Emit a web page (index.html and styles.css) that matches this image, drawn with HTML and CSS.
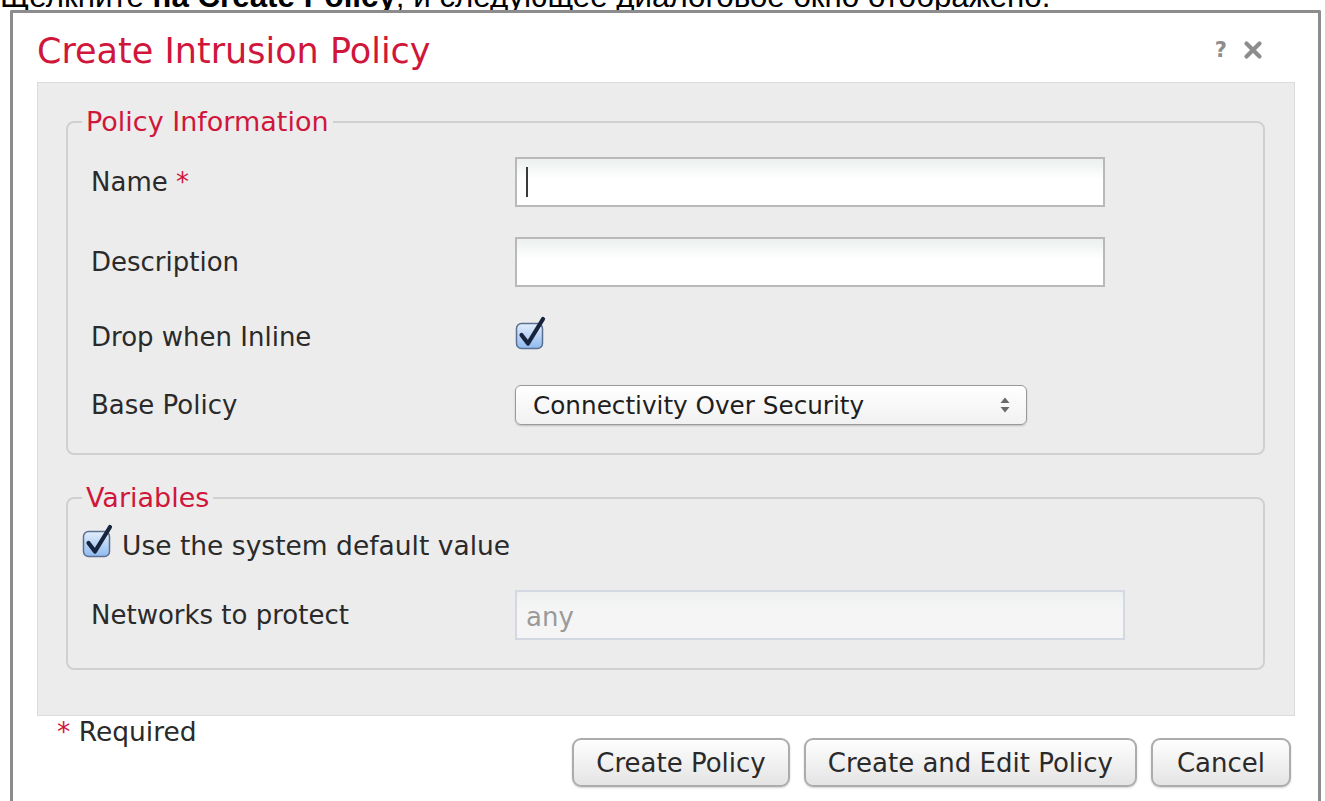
FILE: index.html
```html
<!DOCTYPE html>
<html lang="ru">
<head>
<meta charset="utf-8">
<title>Create Intrusion Policy</title>
<link rel="stylesheet" href="styles.css">
</head>
<body>
<p class="lead"><span class="lead-line">Щелкните <b>на Create Policy</b>, и следующее диалоговое окно отображено.</span></p>

<div class="dialog">
  <div class="dialog-head">
    <h1 class="dialog-title">Create Intrusion Policy</h1>
    <div class="head-tools">
      <span class="help">?</span>
      <svg class="close" width="20" height="20" viewBox="0 0 20 20" aria-label="Close">
        <path d="M3.5 3.5 L16.5 16.5 M16.5 3.5 L3.5 16.5" stroke="#8d8d8d" stroke-width="4.2" stroke-linecap="round" fill="none"/>
      </svg>
    </div>
  </div>

  <div class="panel">
    <fieldset class="group group-info">
      <legend>Policy Information</legend>

      <div class="row row-name">
        <span class="label">Name <span class="req">*</span></span>
        <div class="textbox"><span class="caret"></span></div>
      </div>

      <div class="row row-desc">
        <span class="label">Description</span>
        <div class="textbox"></div>
      </div>

      <div class="row row-drop">
        <span class="label">Drop when Inline</span>
        <svg class="check" width="32" height="34" viewBox="0 0 32 34">
          <defs>
            <linearGradient id="cbFillA" x1="0" y1="0" x2="0" y2="1">
              <stop offset="0" stop-color="#e3eefc"/>
              <stop offset="1" stop-color="#8fbaf0"/>
            </linearGradient>
          </defs>
          <rect x="1.5" y="7.5" width="26" height="25" rx="5" fill="url(#cbFillA)" stroke="#5b6f90" stroke-width="1.5"/>
          <path d="M6.5 19 L13 27.5 L28 3" stroke="#17243c" stroke-width="4.2" stroke-linecap="round" stroke-linejoin="round" fill="none"/>
        </svg>
      </div>

      <div class="row row-base">
        <span class="label">Base Policy</span>
        <div class="select">
          <span class="select-value">Connectivity Over Security</span>
          <svg class="select-arrows" width="10" height="18" viewBox="0 0 10 18">
            <path d="M0.5 7 L5 1.5 L9.5 7 Z M0.5 11 L5 16.5 L9.5 11 Z" fill="#6a6a6a"/>
          </svg>
        </div>
      </div>
    </fieldset>

    <fieldset class="group group-vars">
      <legend>Variables</legend>

      <div class="check-row">
        <svg class="check" width="32" height="34" viewBox="0 0 32 34">
          <defs>
            <linearGradient id="cbFillB" x1="0" y1="0" x2="0" y2="1">
              <stop offset="0" stop-color="#e3eefc"/>
              <stop offset="1" stop-color="#8fbaf0"/>
            </linearGradient>
          </defs>
          <rect x="1.5" y="7.5" width="26" height="25" rx="5" fill="url(#cbFillB)" stroke="#5b6f90" stroke-width="1.5"/>
          <path d="M6.5 19 L13 27.5 L28 3" stroke="#17243c" stroke-width="4.2" stroke-linecap="round" stroke-linejoin="round" fill="none"/>
        </svg>
        <span class="check-text">Use the system default value</span>
      </div>

      <div class="row row-net">
        <span class="label">Networks to protect</span>
        <div class="textbox textbox-disabled">any</div>
      </div>
    </fieldset>
  </div>

  <div class="dialog-foot">
    <div class="required"><span class="req">*</span> Required</div>
    <div class="actions">
      <button class="btn" type="button">Create Policy</button>
      <button class="btn" type="button">Create and Edit Policy</button>
      <button class="btn" type="button">Cancel</button>
    </div>
  </div>
</div>
</body>
</html>
```

FILE: styles.css
```css
html, body {
  margin: 0;
  padding: 0;
  background: #ffffff;
  overflow: hidden;
}

body {
  font-family: "DejaVu Sans", Verdana, sans-serif;
  color: #2a2a2a;
}

/* Sentence above the dialog, only its lower edge is in view */
.lead {
  margin: 0;
  height: 10px;
  overflow: hidden;
  font-family: "Liberation Sans", Arial, sans-serif;
  font-size: 31.3px;
  line-height: 30px;
  color: #000;
  white-space: nowrap;
}

.lead-line {
  display: block;
  margin-top: -18px;
}

/* Dialog frame */
.dialog {
  margin-left: 10px;
  width: 1311px;
  box-sizing: border-box;
  border: 3px solid #8c8c8c;
  border-bottom: none;
  border-radius: 2px 2px 0 0;
  background: #fff;
  padding: 0 23px 40px 24px;
}

.dialog-head {
  display: flex;
  justify-content: space-between;
  align-items: flex-start;
  height: 69px;
  box-sizing: border-box;
  padding-top: 18px;
}

.dialog-title {
  margin: 0;
  font-size: 35px;
  line-height: 40px;
  font-weight: normal;
  color: #d0163a;
}

.head-tools {
  display: flex;
  align-items: center;
  gap: 16px;
  margin-top: 9px;
  margin-right: 32px;
}

.help {
  font-size: 21px;
  font-weight: bold;
  line-height: 20px;
  color: #8d8d8d;
}

.close {
  display: block;
}

/* Grey body of the dialog */
.panel {
  background: #ececec;
  border: 1px solid #dcdcdc;
  padding: 24px 29px 45px 28px;
}

.group {
  margin: 0;
  padding: 0 0 28px 23px;
  border: 2px solid #d0d0d0;
  border-radius: 8px;
  min-inline-size: 0;
}

.group legend {
  margin-left: -9px;
  padding: 0 4px;
  font-size: 27px;
  line-height: 30px;
  color: #d0163a;
}

.group-vars {
  margin-top: 28px;
  padding-left: 0;
}

.group-vars legend {
  margin-left: 14px;
}

.row {
  display: grid;
  grid-template-columns: 424px auto;
  align-items: center;
  justify-items: start;
  font-size: 26px;
}

.row-name { margin-top: 20px; height: 50px; }
.row-desc { margin-top: 30px; height: 50px; }
.row-drop { margin-top: 30px; height: 40px; }
.row-base { margin-top: 28px; height: 40px; }
.row-net  { margin-top: 28px; height: 50px; padding-left: 23px; }

.label {
  white-space: nowrap;
}

.req {
  color: #d0163a;
}

/* Single-line text fields */
.textbox {
  width: 590px;
  height: 50px;
  box-sizing: border-box;
  border: 2px solid #b9b9b9;
  background: linear-gradient(#edf0f0, #ffffff 45%);
  display: flex;
  align-items: center;
  padding-left: 9px;
}

.caret {
  width: 2px;
  height: 30px;
  background: #3a3a3a;
}

.textbox-disabled {
  width: 610px;
  border-color: #d3d8e2;
  background: linear-gradient(#eef0f0, #f5f5f5 40%);
  color: #9a9a9a;
  font-size: 26px;
  padding-top: 4px;
}

/* Checkbox graphic */
.check {
  display: block;
  margin-top: -8px;
}

.check-row {
  display: flex;
  align-items: center;
  gap: 8px;
  margin-top: 15px;
  height: 34px;
  padding-left: 14px;
  font-size: 26.5px;
}

/* Drop-down */
.select {
  width: 512px;
  height: 40px;
  box-sizing: border-box;
  border: 1.5px solid #9a9a9a;
  border-radius: 6px;
  background: linear-gradient(#ffffff, #f1f1f1);
  box-shadow: 0 1px 2px rgba(0, 0, 0, 0.2);
  display: flex;
  align-items: center;
  justify-content: space-between;
  padding: 0 16px 0 17px;
  font-size: 24.7px;
  color: #1e1e1e;
}

.select-arrows {
  display: block;
}

/* Footer */
.dialog-foot {
  display: flex;
  justify-content: space-between;
  align-items: flex-start;
  padding: 0 4px 0 20px;
}

.required {
  padding-top: 1px;
  font-size: 26.5px;
  line-height: 30px;
}

.actions {
  display: flex;
  gap: 14px;
  padding-top: 22px;
}

.btn {
  height: 49px;
  min-width: 140px;
  box-sizing: border-box;
  padding: 0 22px;
  border: 2px solid #acacac;
  border-radius: 9px;
  background: linear-gradient(#fefefe, #e4e4e4);
  box-shadow: 0 1px 2px rgba(0, 0, 0, 0.18);
  font-family: "DejaVu Sans", Verdana, sans-serif;
  font-size: 26px;
  color: #2a2a2a;
}
```
